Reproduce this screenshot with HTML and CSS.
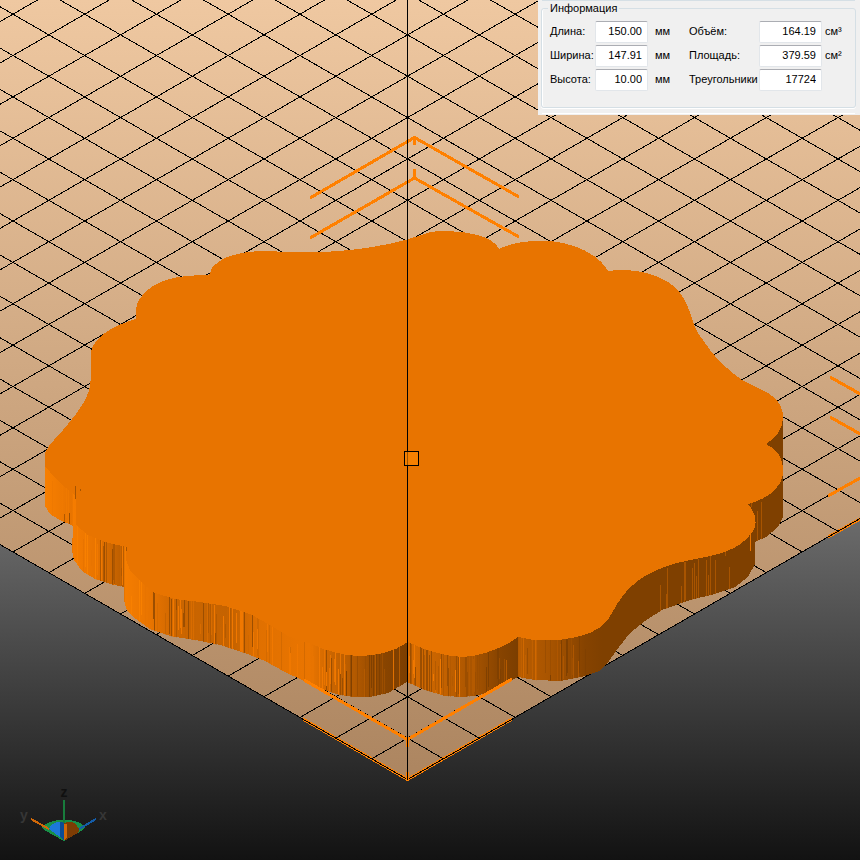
FILE: index.html
```html
<!DOCTYPE html>
<html lang="ru">
<head>
<meta charset="utf-8">
<title>Просмотр модели</title>
<link rel="stylesheet" href="styles.css">
</head>
<body>
<main class="viewport">
  <svg class="scene" viewBox="0 0 860 860" preserveAspectRatio="xMinYMin slice" role="img" aria-label="Модель на рабочем столе">
    <defs>
      <linearGradient id="back" gradientUnits="userSpaceOnUse" x1="0" y1="500" x2="0" y2="860">
        <stop offset="0" stop-color="#707070"/>
        <stop offset="1" stop-color="#121212"/>
      </linearGradient>
      <linearGradient id="floor" gradientUnits="userSpaceOnUse" x1="0" y1="0" x2="0" y2="780">
        <stop offset="0" stop-color="#efc8a1"/>
        <stop offset="1" stop-color="#ac8560"/>
      </linearGradient>
      <linearGradient id="side" gradientUnits="userSpaceOnUse" x1="0" y1="0" x2="860" y2="0">
        <stop offset="0.052" stop-color="#f87f00"/>
        <stop offset="0.084" stop-color="#e87400"/>
        <stop offset="0.085" stop-color="#f57c00"/>
        <stop offset="0.112" stop-color="#e87400"/>
        <stop offset="0.144" stop-color="#b85c00"/>
        <stop offset="0.145" stop-color="#f57d00"/>
        <stop offset="0.176" stop-color="#e87400"/>
        <stop offset="0.205" stop-color="#cc6600"/>
        <stop offset="0.27" stop-color="#c46200"/>
        <stop offset="0.3" stop-color="#e07000"/>
        <stop offset="0.36" stop-color="#ea7500"/>
        <stop offset="0.385" stop-color="#cc6600"/>
        <stop offset="0.415" stop-color="#b05800"/>
        <stop offset="0.445" stop-color="#8a4500"/>
        <stop offset="0.473" stop-color="#7c3e00"/>
        <stop offset="0.474" stop-color="#d86c00"/>
        <stop offset="0.515" stop-color="#c46200"/>
        <stop offset="0.55" stop-color="#a85400"/>
        <stop offset="0.58" stop-color="#884400"/>
        <stop offset="0.602" stop-color="#7c3e00"/>
        <stop offset="0.603" stop-color="#b85c00"/>
        <stop offset="0.64" stop-color="#a85400"/>
        <stop offset="0.68" stop-color="#864300"/>
        <stop offset="0.7" stop-color="#7f4000"/>
      </linearGradient>
      <clipPath id="floor-area"><path d="M0 0H860V518.6L407.5 779.5L0 544.5Z"/></clipPath>
      <clipPath id="side-area"><use href="#side-shape"/></clipPath>
    </defs>

    <rect width="860" height="860" fill="url(#back)"/>
    <path d="M0 0H860V518.6L407.5 779.5L0 544.5Z" fill="url(#floor)"/>
    <path class="edge-glow" d="M303 719L407.5 779.5L512 719M828 537L860 519"/>
    <g class="grid" id="grid" clip-path="url(#floor-area)"></g>
    <path class="grid" d="M0 544.5L407.5 779.5L860 518.6"/>
    <path class="bracket" d="M310 198L414.500 137.500L519 197M414.500 138V145M414.500 169V178M310 238L414.500 178L519 237M830 377L862 395M830 417L862 435M828 496L862 477"/>

    <path id="side-shape" fill="url(#side)" d="M45 460V506L50 514L60 520L73 526L72 550L74 560L82 571L95 579L110 584L124 587V600L127 611L136 619L150 629L170 636L195 640L220 645L245 653L265 661L285 672L300 679L318 688L340 695L355 697L370 697L388 693L400 686L407 682L425 690L445 696L463 697L480 695L500 687L518 677L535 680L560 681L585 676L599 671L607 664L616 651L630 633L645 621L662 610L690 600L715 594L735 587L748 577L755 564V542L766 537L778 527L783 517V420L700 400L200 400Z"/>
    <g id="stripes" clip-path="url(#side-area)"></g>
    <path fill="#e87400" d="M45 466V453C49 443 60 435 68 424C82 407 91 395 91 377V351C96 334 116 325 136 319C135 308 137 301 142 296C154 281 173 275 209 275C213 257 240 251 265 251C310 253 335 253 372 247C398 243 416 237 430 232C445 230 462 231 478 235C489 238 496 243 499 249C518 240 536 241 551 241C578 244 600 256 608 271C640 267 665 277 678 290C694 311 689 323 703 340C713 357 728 370 742 380C757 388 774 393 780 405C789 422 777 438 766 444C780 450 784 462 783 475C779 491 766 499 748 504C757 514 757 526 753 531C740 552 712 556 690 560C651 568 634 581 622 597C614 606 612 618 601 627C583 640 544 644 518 637C502 649 480 656 463 657C442 656 425 650 408 642C394 652 376 656 358 656C340 655 324 650 312 644L290 637L270 625L250 614L225 606L200 602L175 599L155 593L143 584L130 570L126 560V547L105 542L88 535L76 525V496L66 488L55 478Z"/>
    <path fill="#a85400" d="M75 486H76V499H75ZM80 489H81V491H80ZM126 547H127V551H126Z"/>
    <path class="bracket" d="M304 680L407.500 739.500L512 679M407.500 739V747M407.500 772V780"/>
    <path class="axis" d="M407.500 0V780"/>
    <rect class="origin" x="404.500" y="451.500" width="14" height="14"/>

    <g class="gizmo">
      <path fill="#189048" d="M42 827Q48 820 64 820Q80 820 85 827L83 830L64 841L44 830Z"/>
      <path fill="#1c78d8" d="M49 829Q52 822 60 822L64 823V840Z"/>
      <path fill="#0c4c94" d="M60 822H64V840L60 837Z"/>
      <path fill="#7c3c04" d="M64 823Q74 819 79 829V832L66 840H64Z"/>
      <path fill="#d06808" d="M64 824H67V838L64 840Z"/>
      <path stroke="#187c3c" stroke-width="2" d="M64 800V823"/>
      <path stroke="#d06808" stroke-width="2" d="M31 819L49 829"/>
      <path stroke="#145ca8" stroke-width="2" d="M79 829L96 819"/>
      <text class="up" x="64" y="797">z</text>
      <text x="24" y="820">y</text>
      <text x="103" y="820">x</text>
    </g>
  </svg>

  <section class="panel">
    <fieldset class="group">
      <legend>Информация</legend>
      <div class="fields">
        <label for="length">Длина:</label>
        <input id="length" value="150.00" readonly>
        <span class="unit">мм</span>
        <label for="volume">Объём:</label>
        <input id="volume" value="164.19" readonly>
        <span>см³</span>

        <label for="width">Ширина:</label>
        <input id="width" value="147.91" readonly>
        <span class="unit">мм</span>
        <label for="area">Площадь:</label>
        <input id="area" value="379.59" readonly>
        <span>см²</span>

        <label for="height">Высота:</label>
        <input id="height" value="10.00" readonly>
        <span class="unit">мм</span>
        <label for="triangles">Треугольники</label>
        <input id="triangles" value="17724" readonly>
      </div>
    </fieldset>
  </section>
</main>
<script src="scene.js"></script>
</body>
</html>
```
FILE: styles.css
```css
* {
  box-sizing: border-box;
}

body {
  margin: 0;
  background: #121212;
  font: 11px/14px "Liberation Sans", Arial, sans-serif;
  color: #000;
}

.viewport {
  position: relative;
  height: 100vh;
  overflow: hidden;
}

.scene {
  display: block;
  width: 100%;
  height: 100%;
  shape-rendering: crispEdges;
}

.grid,
.axis {
  fill: none;
  stroke: #000;
  stroke-width: 1;
}

.origin {
  fill: rgba(255, 136, 0, 0.6);
  stroke: #000;
}

.bracket {
  fill: none;
  stroke: #ff8000;
  stroke-width: 3;
}

.edge-glow {
  fill: none;
  stroke: #ff8000;
  stroke-width: 3;
}

.gizmo text {
  font: bold 14px "Liberation Sans", Arial, sans-serif;
  fill: #363636;
  text-anchor: middle;
}

.gizmo .up {
  fill: #101010;
}

.panel {
  position: absolute;
  top: 0;
  right: 0;
  width: 322px;
  padding: 1px 4px 7px 3px;
  background: #f0f0f0;
}

.panel::before,
.panel::after {
  content: "";
  position: absolute;
  left: 4px;
  right: 5px;
  height: 1px;
  background: #fff;
}

.panel::before {
  top: 0;
  background: #d5dfe5;
}

.panel::after {
  bottom: 1px;
}

.group {
  margin: 0;
  padding: 6px 0 16px 8px;
  border: 1px solid #d5dfe5;
  border-radius: 3px;
  box-shadow: 0 1px 0 #fff, inset 1px 0 0 #fff;
}

.group legend {
  padding: 0 2px;
  margin-left: -2px;
}

.fields {
  display: grid;
  grid-template-columns: 45px 53px 41px 70px 63px 1fr;
  grid-auto-rows: 22px;
  row-gap: 2px;
  align-items: center;
  white-space: nowrap;
}

.fields label,
.fields span {
  padding-bottom: 2px;
}

.fields input {
  width: 100%;
  height: 22px;
  padding: 0 5px 2px;
  border: 1px solid #e2e6ea;
  border-top-color: #abadb3;
  border-radius: 2px;
  background: #fff;
  font: inherit;
  color: inherit;
  text-align: right;
}

.fields span {
  padding-left: 3px;
}

.fields .unit {
  padding-left: 7px;
}
```
FILE: scene.js
```js
const NS = "http://www.w3.org/2000/svg";

function addLine(parent, x1, y1, x2, y2, stroke) {
  const line = document.createElementNS(NS, "line");
  line.setAttribute("x1", x1);
  line.setAttribute("y1", y1);
  line.setAttribute("x2", x2);
  line.setAttribute("y2", y2);
  if (stroke) line.setAttribute("stroke", stroke);
  parent.appendChild(line);
}

// Floor grid: two families of parallel lines, one cell apart.
const grid = document.getElementById("grid");
const CELL = 41.37;
for (let n = 1; n < 26; n++) {
  addLine(grid, 0, 544.5 - n * CELL, 860, 1040.4 - n * CELL);
  addLine(grid, 0, 1014.5 - n * CELL, 860, 518.6 - n * CELL);
}

// Facets on the side wall: [from x, to x, number, colours].
const BRIGHT = "#f07800";
const MID = "#c86400";
const DEEP = "#9c4e00";
const DARK = "#804000";
const bands = [
  [52, 72, 5, ["#ea7600", "#ef7900"]],
  [76, 98, 7, ["#e87400", "#f88000"]],
  [97, 124, 15, [DEEP, MID, BRIGHT, "#b05800"]],
  [128, 152, 7, ["#e87400", "#f88000"]],
  [152, 184, 14, [DEEP, MID, "#d86c00", BRIGHT]],
  [176, 232, 38, [DEEP, "#b45a00", "#d86c00", MID, BRIGHT]],
  [225, 262, 14, [DEEP, "#d06800", BRIGHT]],
  [262, 312, 10, ["#d46a00", BRIGHT]],
  [312, 346, 24, [DEEP, MID, "#e87400", BRIGHT]],
  [346, 400, 24, [DEEP, "#b45a00", DARK]],
  [409, 445, 24, [DEEP, "#b45a00", BRIGHT, "#d86c00"]],
  [440, 470, 16, ["#b45a00", DEEP, BRIGHT]],
  [468, 510, 18, [DARK, DEEP, "#b45a00"]],
  [519, 552, 20, ["#c06000", DEEP, "#b45a00", "#d06800"]],
  [550, 586, 16, [DEEP, DARK, "#ae5600"]]
];

const outline = document.getElementById("side-shape");
const stripes = document.getElementById("stripes");

let seed = 7;
function random() {
  seed = (seed * 16807) % 2147483647;
  return seed / 2147483647;
}

// Lower rim as points taken from the wall's own path.
const rim = [];
let pen = [0, 0];
for (const [, op, args] of outline.getAttribute("d").matchAll(/([MLHV])([\d. ]*)/g)) {
  const v = args.trim().split(" ").map(Number);
  pen = op === "V" ? [pen[0], v[0]] : v;
  rim.push(pen);
}
function rimAt(x) {
  for (let i = 1; i < rim.length; i++) {
    const [ax, ay] = rim[i - 1];
    const [bx, by] = rim[i];
    if (bx > ax && x >= ax && x <= bx) return ay + (by - ay) * (x - ax) / (bx - ax);
  }
  return 0;
}

for (const [from, to, count, colours] of bands) {
  for (let i = 0; i < count; i++) {
    const x = Math.floor(from + random() * (to - from)) + 0.5;
    const low = rimAt(x);
    const top = low - 42 + (random() < 0.5 ? 0 : random() * 26);
    const bottom = low + 2 - (random() < 0.6 ? 0 : random() * 14);
    addLine(stripes, x, top, x, bottom, colours[Math.floor(random() * colours.length)]);
  }
}

// Single facets: [x, top, bottom, colour].
const facets = [
  [64, 514, 522, "#b05800"], [69, 513, 524, DEEP], [393, 649, 690, "#e07000"],
  [660, 585, 612, "#a85400"], [666, 594, 609, "#a85400"], [667, 568, 609, "#a85400"],
  [681, 586, 604, "#a85400"], [684, 562, 604, "#a85400"], [685, 562, 600, "#a85400"],
  [692, 568, 600, "#a85400"], [694, 563, 600, "#a85400"], [696, 576, 600, "#a85400"],
  [698, 559, 600, "#a85400"], [706, 560, 600, "#a85400"], [708, 575, 600, "#a85400"],
  [710, 556, 596, "#a85400"], [715, 560, 594, "#a85400"], [729, 567, 589, "#a85400"],
  [725, 550, 556, "#a85400"], [750, 534, 551, "#e87400"], [751, 503, 507, "#a85400"],
  [757, 511, 541, "#a85400"], [761, 502, 541, "#a85400"]
];
for (const [x, top, bottom, colour] of facets) {
  addLine(stripes, x + 0.5, top, x + 0.5, bottom, colour);
}
```
